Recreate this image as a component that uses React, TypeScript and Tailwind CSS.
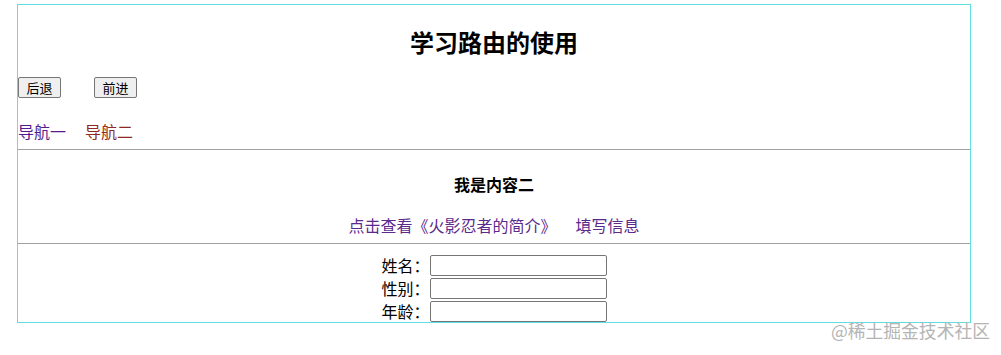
import React from "react";

const font = { fontFamily: '"Noto Sans CJK SC", "Noto Sans", sans-serif' };

export default function App() {
  return (
    <div className="relative w-[1001px] h-[355px] bg-white overflow-hidden" style={font}>
      <div className="ml-[17px] mt-[4px] w-[954px] h-[319px] border border-[#62dede] box-border">
        <h2 className="mt-[21px] text-center text-[24px] leading-[32px] font-bold text-black">学习路由的使用</h2>
        <div className="mt-[19px] flex gap-[33px] items-start">
          <button className="w-[43px] h-[21px] text-[13px] leading-[19px] bg-[#efefef] border border-[#767676] rounded-[2px] text-black">后退</button>
          <button className="w-[43px] h-[21px] text-[13px] leading-[19px] bg-[#efefef] border border-[#767676] rounded-[2px] text-black">前进</button>
        </div>
        <div className="mt-[22px] flex gap-[19px] text-[16px] leading-[22px]">
          <a className="text-[#551a8b]">导航一</a>
          <a className="text-[#8f2a22]">导航二</a>
        </div>
        <div className="mt-[7px] border-t border-[#a0a0a0]">
          <h4 className="mt-[23px] text-center text-[16px] leading-[22px] font-bold text-black">我是内容二</h4>
          <div className="mt-[19px] flex justify-center gap-[19px] text-[16px] leading-[22px] text-[#5b2a8c]">
            <a>点击查看《火影忍者的简介》</a>
            <a>填写信息</a>
          </div>
          <div className="mt-[7px] border-t border-[#a0a0a0] pt-[11px] flex flex-col items-center gap-[2px]">
            {["姓名：", "性别：", "年龄："].map((l) => (
              <div key={l} className="flex items-center h-[21px]">
                <span className="w-[48px] text-[16px] leading-[21px] text-black">{l}</span>
                <input className="w-[177px] h-[21px] border border-[#767676] rounded-[2px] bg-white" />
              </div>
            ))}
          </div>
        </div>
      </div>
      <div className="absolute right-[11px] top-[318px] text-[17.8px] leading-[24px] text-[#b4b4b4]">@稀土掘金技术社区</div>
    </div>
  );
}
